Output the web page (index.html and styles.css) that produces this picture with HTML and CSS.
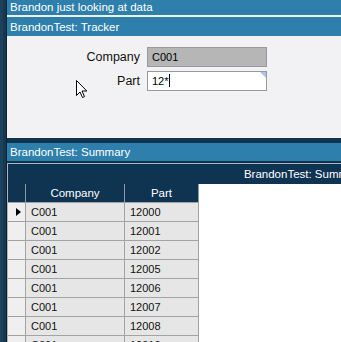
FILE: index.html
```html
<!DOCTYPE html>
<html>
<head>
<meta charset="utf-8">
<link rel="stylesheet" href="styles.css">
</head>
<body>
<div class="app">
  <div class="sidebar"></div>
  <div class="main">
    <div class="titlebar">Brandon just looking at data</div>
    <div class="panel-header tracker">BrandonTest: Tracker</div>
    <div class="form">
      <label class="label">Company</label>
      <div class="input readonly">C001</div>
      <label class="label">Part</label>
      <div class="input editable">12*<span class="caret"></span><span class="corner"></span></div>
      <svg class="cursor" width="12" height="19" viewBox="0 0 12 19"><path d="M0.5 0.5 L0.5 15.5 L4 12 L6.5 17.5 L8.5 16.6 L6 11 L10.8 11 Z" fill="#fff" stroke="#000" stroke-width="1" stroke-linejoin="miter"/></svg>
    </div>
    <div class="divider"></div>
    <div class="panel-header summary">BrandonTest: Summary</div>
    <div class="grid-wrap">
      <div class="grid">
        <div class="grid-title">BrandonTest: Summary</div>
        <div class="table">
          <div class="cell hdr ind"></div><div class="cell hdr">Company</div><div class="cell hdr">Part</div>
          <div class="cell ind current"><span class="arrow"></span></div><div class="cell">C001</div><div class="cell">12000</div>
          <div class="cell ind"></div><div class="cell">C001</div><div class="cell">12001</div>
          <div class="cell ind"></div><div class="cell">C001</div><div class="cell">12002</div>
          <div class="cell ind"></div><div class="cell">C001</div><div class="cell">12005</div>
          <div class="cell ind"></div><div class="cell">C001</div><div class="cell">12006</div>
          <div class="cell ind"></div><div class="cell">C001</div><div class="cell">12007</div>
          <div class="cell ind"></div><div class="cell">C001</div><div class="cell">12008</div>
          <div class="cell ind"></div><div class="cell">C001</div><div class="cell">12010</div>
        </div>
      </div>
    </div>
  </div>
</div>
</body>
</html>
```
FILE: styles.css
```css
html, body {
  margin: 0;
  padding: 0;
  width: 341px;
  height: 342px;
  overflow: hidden;
  font-family: "Liberation Sans", Arial, sans-serif;
  background: #0f3452;
}
.app {
  display: flex;
  height: 342px;
}
.sidebar {
  width: 7px;
  flex: none;
  background: #17374f;
  box-shadow: inset -1px 0 0 #0a2234, inset 3px 0 0 #1d4260;
}
.main {
  flex: 1;
  display: flex;
  flex-direction: column;
  min-width: 0;
  background: #0f3452;
}
.titlebar {
  height: 15px;
  line-height: 15px;
  background: #2e7fab;
  color: #fff;
  font-size: 11.5px;
  padding-left: 3px;
  white-space: nowrap;
}
.panel-header {
  background: #2e7fab;
  color: #fff;
  font-size: 11.5px;
  padding-left: 3px;
  white-space: nowrap;
}
.tracker {
  border-top: 2px solid #eef1f4;
  height: 19px;
  line-height: 20px;
}
.summary {
  height: 18px;
  line-height: 19px;
}
.form {
  position: relative;
  height: 102px;
  box-sizing: border-box;
  background: #f2f2f4;
  padding-top: 11px;
  display: grid;
  grid-template-columns: 133px 120px;
  grid-auto-rows: 20px;
  column-gap: 7px;
  row-gap: 4px;
  align-content: start;
}
.label {
  text-align: right;
  font-size: 12.5px;
  line-height: 20px;
  color: #111;
}
.input {
  position: relative;
  box-sizing: border-box;
  height: 20px;
  border: 1px solid #999;
  font-size: 11px;
  line-height: 18px;
  padding-left: 4px;
  color: #000;
}
.readonly {
  background: #b6b6b6;
}
.editable {
  background: #fff;
}
.caret {
  display: inline-block;
  width: 1px;
  height: 13px;
  background: #000;
  vertical-align: -2px;
}
.corner {
  position: absolute;
  top: 0;
  right: 0;
  width: 0;
  height: 0;
  border-top: 6px solid #a9c4e4;
  border-left: 6px solid transparent;
}
.cursor {
  position: absolute;
  left: 69px;
  top: 44px;
}
.divider {
  height: 5px;
  background: #0f3452;
}
.grid-wrap {
  flex: 1;
  padding-top: 2px;
  background: #0f3452;
  overflow: hidden;
}
.grid {
  width: 592px;
  height: 100%;
  background: #fff;
  border-top: 1px solid #a9b3bb;
  border-left: 1px solid #a9b3bb;
}
.grid-title {
  height: 20px;
  line-height: 20px;
  background: #0f3452;
  color: #fff;
  font-size: 11.5px;
  text-align: center;
}
.table {
  display: grid;
  grid-template-columns: 18px 99px 74px;
  grid-auto-rows: 19px;
  width: 191px;
}
.cell {
  box-sizing: border-box;
  border-right: 1px solid #a3a3a3;
  border-bottom: 1px solid #a3a3a3;
  background: #e6e6e6;
  font-size: 11px;
  line-height: 19px;
  padding-left: 5px;
  color: #111;
  white-space: nowrap;
}
.cell.ind {
  background: #efefef;
  padding-left: 0;
  position: relative;
}
.cell.hdr {
  background: #0f3452;
  color: #fff;
  text-align: center;
  padding-left: 0;
  font-size: 11.5px;
  border-right-color: #8e9ba6;
  border-bottom-color: #a3a3a3;
}
.arrow {
  position: absolute;
  left: 8px;
  top: 5px;
  width: 0;
  height: 0;
  border-left: 5px solid #000;
  border-top: 4.5px solid transparent;
  border-bottom: 4.5px solid transparent;
}
```
